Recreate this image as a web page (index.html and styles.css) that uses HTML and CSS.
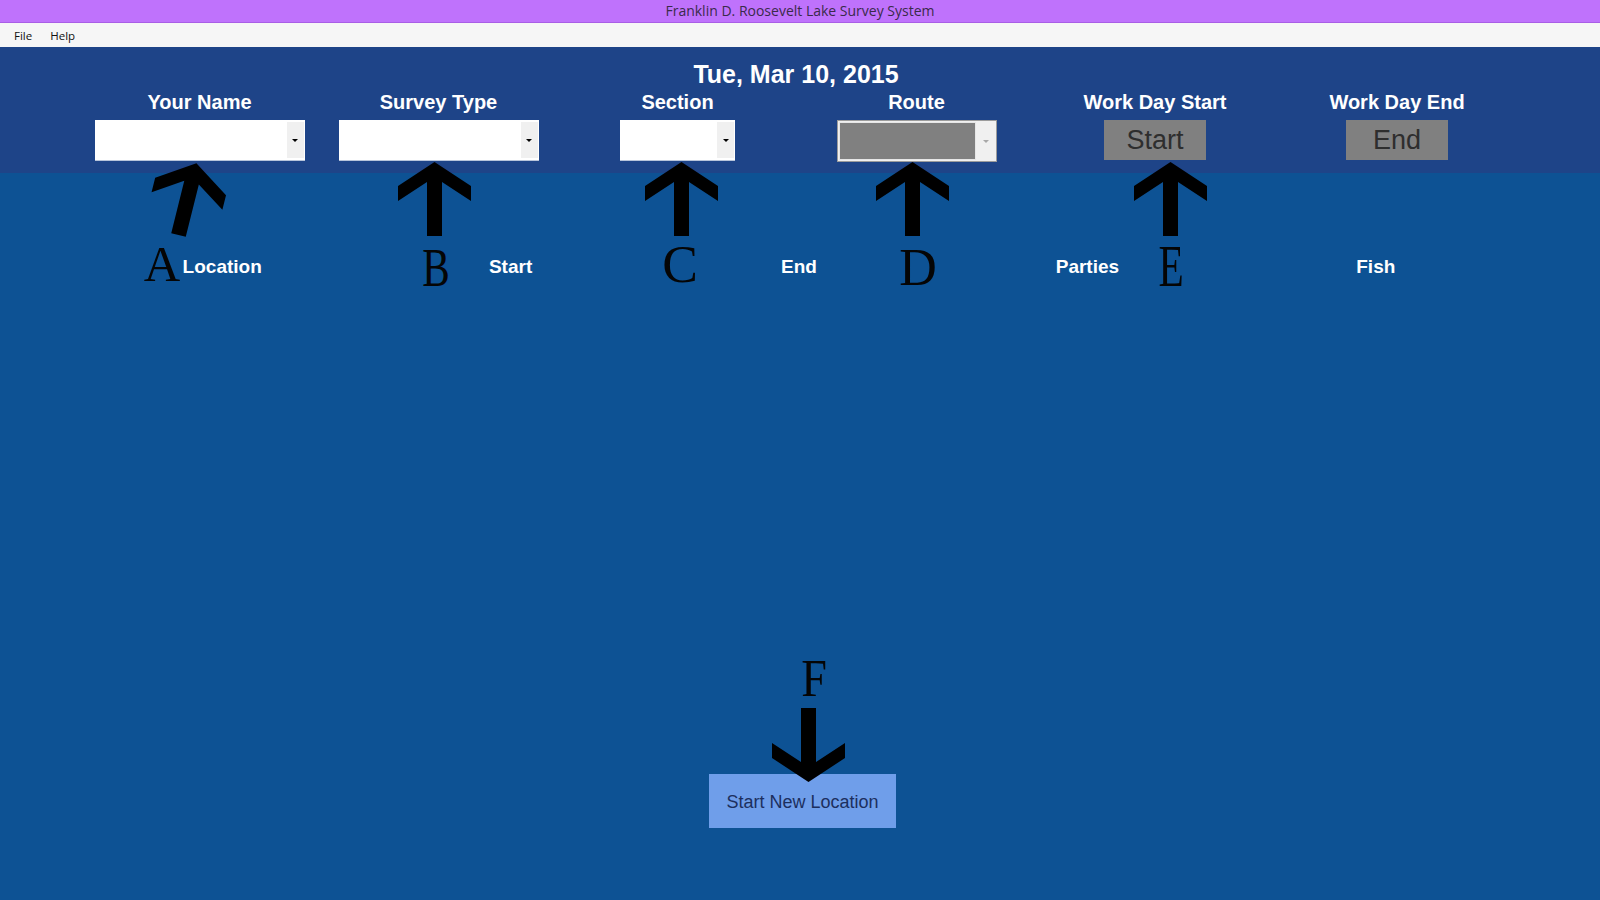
FILE: index.html
```html
<!DOCTYPE html>
<html>
<head>
<meta charset="utf-8">
<title>Franklin D. Roosevelt Lake Survey System</title>
<link rel="stylesheet" href="styles.css">
</head>
<body>
<div class="window">
  <div class="titlebar">Franklin D. Roosevelt Lake Survey System</div>
  <div class="menubar"><span class="menu-item">File</span><span class="menu-item">Help</span></div>
  <div class="header">
    <div class="date">Tue, Mar 10, 2015</div>
    <div class="fields">
      <div class="field">
        <div class="label">Your Name</div>
        <div class="combo combo-name"><div class="combo-btn"><span class="caret"></span></div></div>
      </div>
      <div class="field">
        <div class="label">Survey Type</div>
        <div class="combo combo-type"><div class="combo-btn"><span class="caret"></span></div></div>
      </div>
      <div class="field">
        <div class="label">Section</div>
        <div class="combo combo-section"><div class="combo-btn"><span class="caret"></span></div></div>
      </div>
      <div class="field">
        <div class="label">Route</div>
        <div class="combo combo-route disabled"><div class="combo-fill"></div><div class="combo-btn"><span class="caret"></span></div></div>
      </div>
      <div class="field">
        <div class="label">Work Day Start</div>
        <button class="day-btn">Start</button>
      </div>
      <div class="field">
        <div class="label">Work Day End</div>
        <button class="day-btn">End</button>
      </div>
    </div>
  </div>
  <div class="main">
    <div class="columns">
      <div class="col-head">Location</div>
      <div class="col-head">Start</div>
      <div class="col-head">End</div>
      <div class="col-head">Parties</div>
      <div class="col-head">Fish</div>
    </div>
    <div class="actions">
      <button class="new-loc">Start New Location</button>
    </div>
  </div>

  <div class="annotations">
    <svg class="arrow arrow-a" width="73" height="74" viewBox="0 0 73 74"><polygon points="36.5,0 73,24 73,39 44,20 44,74 29,74 29,20 0,39 0,24"/></svg>
    <svg class="arrow arrow-b" width="73" height="74" viewBox="0 0 73 74"><polygon points="36.5,0 73,24 73,39 44,20 44,74 29,74 29,20 0,39 0,24"/></svg>
    <svg class="arrow arrow-c" width="73" height="74" viewBox="0 0 73 74"><polygon points="36.5,0 73,24 73,39 44,20 44,74 29,74 29,20 0,39 0,24"/></svg>
    <svg class="arrow arrow-d" width="73" height="74" viewBox="0 0 73 74"><polygon points="36.5,0 73,24 73,39 44,20 44,74 29,74 29,20 0,39 0,24"/></svg>
    <svg class="arrow arrow-e" width="73" height="74" viewBox="0 0 73 74"><polygon points="36.5,0 73,24 73,39 44,20 44,74 29,74 29,20 0,39 0,24"/></svg>
    <svg class="arrow arrow-f" width="73" height="74" viewBox="0 0 73 74"><polygon points="36.5,0 73,24 73,39 44,20 44,74 29,74 29,20 0,39 0,24"/></svg>
    <span class="letter l-a">A</span>
    <span class="letter l-b">B</span>
    <span class="letter l-c">C</span>
    <span class="letter l-d">D</span>
    <span class="letter l-e">E</span>
    <span class="letter l-f">F</span>
  </div>
</div>
</body>
</html>
```

FILE: styles.css
```css
html, body {
  margin: 0;
  padding: 0;
  width: 1600px;
  height: 900px;
  overflow: hidden;
}

.window {
  position: relative;
  width: 1600px;
  height: 900px;
  display: flex;
  flex-direction: column;
  background: #0d5294;
  font-family: "Liberation Sans", Arial, sans-serif;
}

.titlebar {
  height: 23px;
  background: #bf72fc;
  border-bottom: 1px solid #a95ee6;
  box-sizing: border-box;
  color: #3a2a4a;
  font-family: "Open Sans", "Noto Sans", sans-serif;
  font-size: 14px;
  line-height: 22px;
  text-align: center;
}

.menubar {
  height: 24px;
  background: #f6f6f6;
  display: flex;
  align-items: center;
  gap: 18px;
  padding-left: 14px;
  font-family: "Open Sans", "Noto Sans", sans-serif;
  font-size: 11.5px;
  color: #111;
}

.header {
  height: 126px;
  background: #1e4488;
  box-sizing: border-box;
  padding-top: 15px;
}

.date {
  color: #fff;
  font-weight: bold;
  font-size: 25px;
  line-height: 25px;
  text-align: center;
  padding-right: 8px;
}

.fields {
  display: grid;
  grid-template-columns: 239px 239px 239px 239px 238px 246px;
  padding-left: 80px;
  margin-top: 5px;
}

.field {
  display: flex;
  flex-direction: column;
  align-items: center;
}

.label {
  color: #fff;
  font-weight: bold;
  font-size: 20px;
  line-height: 20px;
  height: 20px;
  margin-bottom: 8px;
  white-space: nowrap;
}

.combo {
  height: 41px;
  background: #fff;
  box-sizing: border-box;
  border-bottom: 1px solid #b8c4da;
  display: flex;
  justify-content: flex-end;
  padding: 2px 1px 2px 0;
}

.combo-name { width: 210px; }
.combo-type { width: 200px; }
.combo-section { width: 115px; }

.combo-route {
  width: 160px;
  height: 42px;
  border: 1px solid #9c9c9c;
  background: #f0f0f0;
  padding: 1px;
  justify-content: space-between;
}

.combo-fill {
  width: 137px;
  background: #808080;
  border: 1px solid #e6e6e6;
  box-sizing: border-box;
}

.combo-btn {
  width: 17px;
  background: #f0f0f0;
  display: flex;
  align-items: center;
  justify-content: center;
}

.caret {
  width: 0;
  height: 0;
  border-left: 3px solid transparent;
  border-right: 3px solid transparent;
  border-top: 3px solid #000;
  margin-top: 1px;
}

.disabled .caret {
  border-top-color: #a8a8a8;
}

.day-btn {
  width: 102px;
  height: 40px;
  margin: 0;
  padding: 0;
  border: none;
  background: #808080;
  color: #2e2e2e;
  font-family: "Liberation Sans", Arial, sans-serif;
  font-size: 27px;
  line-height: 40px;
}

.main {
  flex: 1;
  display: flex;
  flex-direction: column;
}

.columns {
  display: grid;
  grid-template-columns: repeat(5, 1fr);
  padding: 0 80px 0 78px;
  margin-top: 84px;
}

.col-head {
  color: #fff;
  font-weight: bold;
  font-size: 19px;
  line-height: 19px;
  text-align: center;
}

.actions {
  display: flex;
  justify-content: center;
  padding-left: 5px;
  margin-top: 498px;
}

.new-loc {
  width: 187px;
  height: 54px;
  margin: 0;
  border: none;
  background: #6f9eea;
  color: #1c2f5e;
  font-family: "Liberation Sans", Arial, sans-serif;
  font-size: 18px;
  padding: 3px 0 0 0;
}

/* annotation overlay */
.annotations {
  position: absolute;
  inset: 0;
  pointer-events: none;
}

.arrow {
  position: absolute;
  overflow: visible;
  fill: #000;
}

.arrow-a { left: 142px; top: 161px; transform-origin: 36.5px 74px; transform: rotate(14deg); }
.arrow-b { left: 398px; top: 162px; }
.arrow-c { left: 645px; top: 162px; }
.arrow-d { left: 876px; top: 162px; }
.arrow-e { left: 1134px; top: 162px; }
.arrow-f { left: 772px; top: 708px; transform: rotate(180deg); }

.letter {
  position: absolute;
  width: 60px;
  text-align: center;
  font-family: "Liberation Serif", "Times New Roman", serif;
  line-height: 1;
  color: #050505;
}

.l-a { font-size: 50.5px; left: 132px; top: 239px; }
.l-b { font-size: 55px; left: 406px; top: 240px; transform: scaleX(0.75); }
.l-c { font-size: 53.5px; left: 650px; top: 238px; }
.l-d { font-size: 52px; left: 888px; top: 242px; }
.l-e { font-size: 59px; left: 1141px; top: 237px; transform: scaleX(0.7); }
.l-f { font-size: 53px; left: 784px; top: 652px; transform: scaleX(0.87); }
```
